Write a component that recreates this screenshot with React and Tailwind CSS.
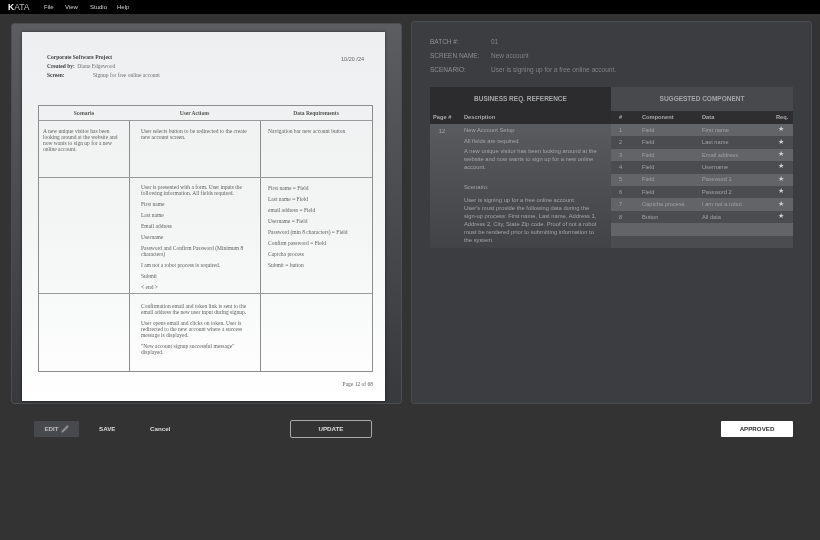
import { Pencil } from 'lucide-react'

const rows = [
  ['1', 'Field', 'First name'],
  ['2', 'Field', 'Last name'],
  ['3', 'Field', 'Email address'],
  ['4', 'Field', 'Username'],
  ['5', 'Field', 'Password 1'],
  ['6', 'Field', 'Password 2'],
  ['7', 'Captcha process', 'I am not a robot'],
  ['8', 'Button', 'All data'],
  ['', '', ''],
  ['', '', ''],
]

const formItems = ['First name', 'Last name', 'Email address', 'Username']
const dataReqs = [
  'First name = Field',
  'Last name = Field',
  'email address = Field',
  'Username = Field',
  'Password (min 8 characters) = Field',
  'Confirm password = Field',
  'Captcha process',
  'Submit = button',
]

function Paper() {
  return (
    <div className="w-[363px] h-[369px] ml-[10px] mt-[8px] bg-gradient-to-b from-[#eeeff0] via-[#f3f4f4] to-white shadow-[0_0_3px_rgba(0,0,0,0.5)] px-[16px] font-['Liberation_Serif',serif] text-[#626262] text-[5.5px] leading-[6px]">
      <div className="flex justify-between pt-[22px] pl-[9px] pr-[5px] h-[73px]">
        <div className="flex flex-col gap-[3px] text-[#444]">
          <div className="font-bold">Corporate Software Project</div>
          <div><span className="font-bold">Created by:</span> <span className="ml-[1px] text-[#707070]">Diane Edgewood</span></div>
          <div className="flex">
            <span className="font-bold w-[46px]">Screen:</span>
            <span className="text-[#707070]">Signup for free online account</span>
          </div>
        </div>
        <div className="font-['Liberation_Sans',sans-serif] mt-[2px]">10/20 /24</div>
      </div>

      <div className="w-[335px] border border-[#8d8d8d] flex flex-col">
        <div className="flex h-[15px] items-center border-b border-[#9a9a9a] font-bold text-[#555]">
          <div className="w-[90px] text-center">Scenario</div>
          <div className="w-[131px] text-center">User Actions</div>
          <div className="flex-1 text-center">Data Requirements</div>
        </div>

        <div className="flex h-[57px] border-b border-[#9a9a9a]">
          <div className="w-[91px] border-r border-[#8d8d8d] pl-[4px] pr-[8px] pt-[7px]">
            A new unique visitor has been looking around at the website and now wants to sign up for a new online account.
          </div>
          <div className="w-[131px] border-r border-[#8d8d8d] pl-[11px] pr-[10px] pt-[7px]">
            User selects button to be redirected to the create new account screen.
          </div>
          <div className="flex-1 pl-[7px] pr-[10px] pt-[7px]">Navigation bar new account button</div>
        </div>

        <div className="flex h-[116px] border-b border-[#9a9a9a]">
          <div className="w-[91px] border-r border-[#8d8d8d]" />
          <div className="w-[131px] border-r border-[#8d8d8d] pl-[11px] pr-[14px] pt-[6px] flex flex-col gap-[5px]">
            <div>User is presented with a form. User inputs the following information. All fields required.</div>
            {formItems.map((item) => <div key={item}>{item}</div>)}
            <div>Password and Confirm Password (Minimum 8 characters)</div>
            <div>I am not a robot process is required.</div>
            <div>Submit</div>
            <div>&lt; end &gt;</div>
          </div>
          <div className="flex-1 pl-[7px] pt-[7px] flex flex-col gap-[5px]">
            {dataReqs.map((item) => <div key={item}>{item}</div>)}
          </div>
        </div>

        <div className="flex h-[77px]">
          <div className="w-[91px] border-r border-[#8d8d8d]" />
          <div className="w-[131px] border-r border-[#8d8d8d] pl-[11px] pr-[12px] pt-[9px] flex flex-col gap-[5px]">
            <div>Confirmation email and token link is sent to the email address the new user input during signup.</div>
            <div>User opens email and clicks on token. User is redirected to the new account where a success message is displayed.</div>
            <div>"New account signup successful message" displayed.</div>
          </div>
          <div className="flex-1" />
        </div>
      </div>

      <div className="w-[335px] text-right mt-[9px]">Page 12 of 68</div>
    </div>
  )
}

function MetaRow({ label, value }) {
  return (
    <div className="flex h-[14px] items-center">
      <span className="w-[61px] font-medium text-[#8f9093]">{label}</span>
      <span className="text-[#818285]">{value}</span>
    </div>
  )
}

function ReqTable() {
  return (
    <div className="flex w-[363px] h-[161px] ml-[18px] mt-[10px] text-[5.7px] font-['Liberation_Sans',sans-serif]">
      <div className="w-[181px] flex flex-col">
        <div className="h-[24px] bg-[#2c2c2e] flex items-center justify-center text-[6.5px] font-bold text-[#a5a6a8]">BUSINESS REQ. REFERENCE</div>
        <div className="h-[13px] bg-[#2c2c2e] flex items-center pl-[3px] text-[#a8a9ab] font-bold">
          <span className="w-[31px]">Page #</span>
          <span>Description</span>
        </div>
        <div className="flex-1 flex bg-gradient-to-b from-[#5a5b5f] to-[#424346] text-[#a3a4a6]">
          <div className="w-[24px] text-center pt-[3px]">12</div>
          <div className="flex-1 pl-[10px] pr-[14px] pt-[2px] text-[5.8px] leading-[8px]">
            <div>New Account Setup</div>
            <div className="mt-[3px]">All fields are required</div>
            <div className="mt-[2px]">A new unique visitor has been looking around at the website and now wants to sign up for a new online account.</div>
            <div className="mt-[12px]">Scenario:</div>
            <div className="mt-[5px]">User is signing up for a free online account.<br />User's must provide the following data during the sign-up process: First name, Last name, Address 1, Address 2, City, State Zip code. Proof of not a robot must be rendered prior to submitting information to the system.</div>
          </div>
        </div>
      </div>
      <div className="flex-1 flex flex-col">
        <div className="h-[24px] bg-[#48494d] flex items-center justify-center text-[6.5px] font-bold text-[#a5a6a8]">SUGGESTED COMPONENT</div>
        <div className="h-[13px] bg-[#2e2e31] flex items-center text-[#a8a9ab] font-bold">
          <span className="w-[31px] pl-[8px]">#</span>
          <span className="w-[60px]">Component</span>
          <span className="w-[74px]">Data</span>
          <span>Req.</span>
        </div>
        {rows.map((row, i) => (
          <div key={i} className={`h-[12.4px] flex items-center text-[#a0a1a3] ${i % 2 === 0 ? 'bg-[#636467]' : 'bg-[#4b4c50]'}`}>
            <span className="w-[31px] pl-[8px]">{row[0]}</span>
            <span className="w-[60px]">{row[1]}</span>
            <span className="w-[74px]">{row[2]}</span>
            {row[0] && <span className="text-[#d0d0d1] text-[6.5px] ml-[2px] -mt-[2px]">★</span>}
          </div>
        ))}
      </div>
    </div>
  )
}

export default function App() {
  return (
    <div className="w-[820px] h-[540px] bg-[#333333] flex flex-col overflow-hidden blur-[0.45px] font-['Liberation_Sans',sans-serif]">
      <header className="h-[14px] bg-black flex items-center pl-[8px] text-[6px] text-[#d0d0d0]">
        <span className="w-[36px] text-[8.5px] leading-none text-[#bbb]"><b className="text-white">K</b>ATA</span>
        <nav className="flex">
          <span className="w-[21px]">File</span>
          <span className="w-[25px]">View</span>
          <span className="w-[27px]">Studio</span>
          <span>Help</span>
        </nav>
      </header>

      <div className="flex gap-[9px] pl-[11px] h-[390px] items-end">
        <section className="w-[391px] h-[381px] rounded-[3px] border border-[#4d4e51] bg-gradient-to-b from-[#5c5d61] to-[#38393c]">
          <Paper />
        </section>

        <section className="w-[401px] h-[383px] rounded-[3px] border border-[#4a4b4e] bg-[#3c3d40]">
          <div className="pl-[18px] pt-[13px] text-[6.5px]">
            <MetaRow label="BATCH #:" value="01" />
            <MetaRow label="SCREEN NAME:" value="New account" />
            <MetaRow label="SCENARIO:" value="User is signing up for a free online account." />
          </div>
          <ReqTable />
        </section>
      </div>

      <footer className="flex items-center pt-[16px] text-[6.2px] font-bold text-[#dcdcdc]">
        <button className="ml-[34px] w-[45px] h-[16px] bg-[#48494c] rounded-[1px] flex items-center justify-center gap-[2px] text-[#bdbdbd]">
          EDIT <Pencil size={8} strokeWidth={1.5} className="fill-[#8a8a8a] text-[#9a9a9a]" />
        </button>
        <span className="ml-[20px] w-[51px]">SAVE</span>
        <span className="w-[140px]">Cancel</span>
        <button className="w-[82px] h-[18px] border border-[#a9a9a9] rounded-[2px] text-center">UPDATE</button>
        <button className="ml-[349px] w-[72px] h-[16px] bg-white rounded-[1px] text-[#333] text-center">APPROVED</button>
      </footer>
    </div>
  )
}
